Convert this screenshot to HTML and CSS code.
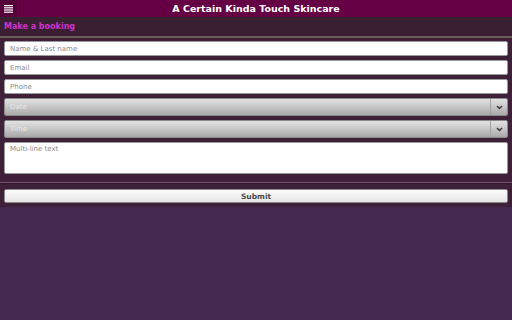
FILE: index.html
```html
<!DOCTYPE html>
<html lang="en">

<head>
    <meta charset="UTF-8">
    <title>A Certain Kinda Touch Skincare</title>
    <link rel="stylesheet" href="styles.css">
</head>

<body>

    <header class="topbar">
        <button class="menu" aria-label="Menu">
            <svg width="9" height="8" viewBox="0 0 9 8">
                <rect x="0" y="0" width="9" height="1.2" fill="#fff"/>
                <rect x="0" y="2.2" width="9" height="1.2" fill="#fff"/>
                <rect x="0" y="4.4" width="9" height="1.2" fill="#fff"/>
                <rect x="0" y="6.6" width="9" height="1.2" fill="#fff"/>
            </svg>
        </button>
        <h1>A Certain Kinda Touch Skincare</h1>
    </header>

    <div class="booking-head">Make a booking</div>

    <form class="booking">
        <div class="fields">
            <input type="text" placeholder="Name &amp; Last name">
            <input type="email" placeholder="Email">
            <input type="tel" placeholder="Phone">
            <div class="select">
                <span class="value">Date</span>
                <span class="arrow">
                    <svg width="7" height="5" viewBox="0 0 7 5"><path d="M1 1 L3.5 3.5 L6 1" fill="none" stroke="#3a3a3a" stroke-width="1.5"/></svg>
                </span>
            </div>
            <div class="select">
                <span class="value">Time</span>
                <span class="arrow">
                    <svg width="7" height="5" viewBox="0 0 7 5"><path d="M1 1 L3.5 3.5 L6 1" fill="none" stroke="#3a3a3a" stroke-width="1.5"/></svg>
                </span>
            </div>
            <textarea placeholder="Multi-line text"></textarea>
        </div>
        <div class="actions">
            <button type="button" class="submit">Submit</button>
        </div>
    </form>

</body></html>
```

FILE: styles.css
```css
* {
    margin: 0px;
    padding: 0px;
    box-sizing: border-box;
}

body {
    background: #442a50;
    font-family: "DejaVu Sans", sans-serif;
    height: 320px;
    overflow: hidden;
}

.topbar {
    display: flex;
    height: 17px;
    background: #660044;
}

.menu {
    width: 17px;
    height: 17px;
    border: none;
    background: #56003a;
    display: flex;
    align-items: center;
    justify-content: center;
}

h1 {
    flex: 1;
    text-align: center;
    padding-right: 17px;
    font-size: 9.5px;
    line-height: 17px;
    color: #fff;
}

.booking-head {
    height: 21px;
    padding: 5px 0 0 4px;
    background: #3a1f32;
    color: #cc33cc;
    font-weight: bold;
    font-size: 8px;
    border-bottom: 2px solid #6b5e58;
}

.booking {
    background: #3e2038;
}

.fields {
    display: flex;
    flex-direction: column;
    gap: 4px;
    padding: 3px 4px 8px 4px;
    border-bottom: 1px solid #7a5070;
}

input,
textarea {
    height: 15px;
    border: 1px solid #9a9a9a;
    border-radius: 2px;
    background: #fff;
    padding: 0 5px;
    font-family: "DejaVu Sans", sans-serif;
    font-size: 7px;
}

input::placeholder,
textarea::placeholder {
    color: #8a8a8a;
}

textarea {
    height: 32px;
    padding-top: 2px;
    resize: none;
}

.select {
    display: flex;
    height: 18px;
    border: 1px solid #8a8a8a;
    border-radius: 2px;
    background: linear-gradient(#e2e2e2, #c4c4c4 55%, #a8a8a8);
}

.value {
    flex: 1;
    padding: 0 5px;
    font-size: 7px;
    line-height: 16px;
    color: #e6e6e6;
}

.arrow {
    width: 17px;
    display: flex;
    align-items: center;
    justify-content: center;
    border-left: 1px solid #a0a0a0;
}

.actions {
    padding: 5px 4px 4px 4px;
    border-top: 1px solid #2e1728;
}

.submit {
    display: block;
    width: 100%;
    height: 14px;
    border: 1px solid #8a8a8a;
    border-radius: 2px;
    background: linear-gradient(#fbfbfb, #e6e6e6);
    font-family: "DejaVu Sans", sans-serif;
    font-weight: bold;
    font-size: 7.5px;
    color: #4a4a4a;
}
```
